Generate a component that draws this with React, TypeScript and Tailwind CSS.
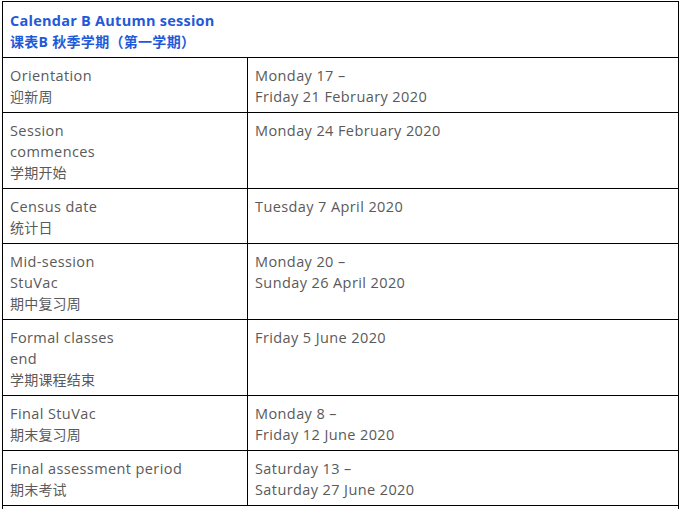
import React from "react";

const rows: { en: string[]; zh: string; date: string[] }[] = [
  { en: ["Orientation"], zh: "迎新周", date: ["Monday 17 –", "Friday 21 February 2020"] },
  { en: ["Session", "commences"], zh: "学期开始", date: ["Monday 24 February 2020"] },
  { en: ["Census date"], zh: "统计日", date: ["Tuesday 7 April 2020"] },
  { en: ["Mid-session", "StuVac"], zh: "期中复习周", date: ["Monday 20 –", "Sunday 26 April 2020"] },
  { en: ["Formal classes", "end"], zh: "学期课程结束", date: ["Friday 5 June 2020"] },
  { en: ["Final StuVac"], zh: "期末复习周", date: ["Monday 8 –", "Friday 12 June 2020"] },
  { en: ["Final assessment period"], zh: "期末考试", date: ["Saturday 13 –", "Saturday 27 June 2020"] },
];

export default function App() {
  return (
    <div
      className="h-[509px] w-[681px] overflow-hidden bg-white pl-[2px] pt-[1px]"
      style={{ fontFamily: '"Open Sans", "Noto Sans CJK SC", sans-serif' }}
    >
      <table className="w-[677px] border-collapse text-[14.5px] leading-[21px] tracking-[0.4px] text-[#5a5a5a]">
        <tbody>
          <tr>
            <td colSpan={2} className="border border-black px-[7px] pt-[8px] pb-[5px] font-bold tracking-[0.25px] text-[#1f5ad8]">
              <div className="text-[14.5px]">Calendar B Autumn session</div>
              <div className="text-[14px] tracking-[0.3px]">课表B 秋季学期（第一学期）</div>
            </td>
          </tr>
          {rows.map((r, i) => (
            <tr key={i}>
              <td className="w-[245px] border border-black px-[7px] pt-[7px] pb-[5px] align-top">
                {r.en.map((l, j) => (
                  <div key={j}>{l}</div>
                ))}
                <div className="text-[14px] tracking-[0.2px]">{r.zh}</div>
              </td>
              <td className="border border-black px-[7px] pt-[7px] pb-[5px] align-top">
                {r.date.map((l, j) => (
                  <div key={j}>{l}</div>
                ))}
              </td>
            </tr>
          ))}
          <tr>
            <td colSpan={2} className="h-[40px] border border-black" />
          </tr>
        </tbody>
      </table>
    </div>
  );
}
